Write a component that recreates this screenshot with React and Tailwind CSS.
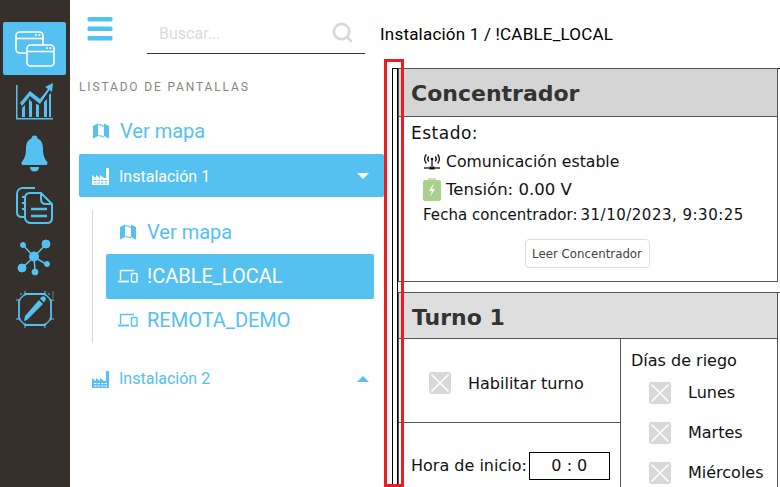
import React from 'react';
import { Search, X } from 'lucide-react';

const WindowsIcon = () => (
  <svg width="40" height="36" viewBox="0 0 40 36" fill="none" stroke="#fff" strokeWidth="1.6">
    <rect x="1" y="1" width="27" height="21" rx="3.5" fill="#55c1f1" />
    <path d="M1 7.5h27" />
    <path d="M20 4.2h1.8M23.5 4.2h1.8" strokeWidth="1.8" />
    <rect x="12" y="14" width="27" height="21" rx="3.5" fill="#55c1f1" />
    <path d="M12 20.5h27" />
    <path d="M31 17.2h1.8M34.5 17.2h1.8" strokeWidth="1.8" />
  </svg>
);

const ChartIcon = () => (
  <svg width="37" height="37" viewBox="0 0 37 37" fill="#55c1f1">
    <path d="M0 2h1.500v33H37v1.500H0z" />
    <path d="M6 34V25l3-3v12zM13 34V16l3 3v15zM20 34V21l3 1v12zM28 34V19l3-3v18zM33 34V12l2-2v24z" />
    <path d="M4 20l10-12 10 8 8-10-3-2 8-4-1 9-2.500-2L24 21 14 13 6 23z" />
  </svg>
);

const BellIcon = () => (
  <svg width="27" height="37" viewBox="0 0 27 37" fill="#55c1f1">
    <circle cx="13.500" cy="3.500" r="3" />
    <path d="M13.500 3C7 3 5 8 5 14c0 5-1 9-3.500 12C0 27.500 0 30 2.500 30h22c2.500 0 2.500-2.500 1-4C23 23 22 19 22 14c0-6-2-11-8.500-11z" />
    <path d="M9 32h9c0 3-2 4.500-4.500 4.500S9 35 9 32z" />
  </svg>
);

const DocsIcon = () => (
  <svg width="37" height="37" viewBox="0 0 37 37" fill="none" stroke="#55c1f1" strokeWidth="2">
    <path d="M19 1H7C3.500 1 1 3.500 1 7v18c0 3.500 2.500 5 5 5h3" />
    <path d="M9 10H6M9 16H6M9 22H6" />
    <path d="M14 6h11l11 11v14c0 3-2 5-5 5H15c-3 0-6-2-6-5V11c0-3 2-5 5-5z" />
    <path d="M25 6v6c0 3 2 5 5 5h6" />
    <path d="M15 22h16M15 29h16" strokeWidth="2.400" />
  </svg>
);

const NetworkIcon = () => (
  <svg width="35" height="37" viewBox="0 0 35 37" fill="#55c1f1" stroke="#55c1f1">
    <path d="M17 18L6 6M17 18L29 5M17 18L5 29M17 18l1 14M17 18l12 7" strokeWidth="1.500" />
    <circle cx="17" cy="17.500" r="4.500" />
    <circle cx="6" cy="6" r="2.500" />
    <circle cx="29" cy="5" r="4" />
    <circle cx="5" cy="29" r="4" />
    <circle cx="18" cy="33" r="3" />
    <circle cx="30" cy="25" r="2.500" />
  </svg>
);

const EditIcon = () => (
  <svg width="38" height="37" viewBox="0 0 38 37" fill="none" stroke="#55c1f1">
    <path d="M9 3h20M9 34h20M3 9v19M35 9v19" strokeWidth="1.800" />
    <path d="M9 3L3 9M29 3l6 6M9 34l-6-6M29 34l6-6" strokeWidth="1.200" />
    <path d="M9 0v5M6 3H4M29 0v5M32 3h2M0 9h5M33 9h5M0 28h5M33 28h5M9 32v5M29 32v5" strokeWidth="1" />
    <path d="M37 0v7" strokeWidth="0.800" stroke="#7d8a92" />
    <path d="M11 29l-3 1 1-5 14-16 4 4z" fill="#55c1f1" stroke="none" />
    <path d="M24 7.500l2-2c1-.5 2-.5 3 .5s1 2 .5 3L28 11.500z" fill="#55c1f1" stroke="none" />
  </svg>
);

const AntennaIcon = () => (
  <svg width="18" height="18" viewBox="0 0 18 18" fill="none" stroke="#111" strokeWidth="1.300">
    <circle cx="9" cy="6" r="1.300" fill="#111" stroke="none" />
    <path d="M9 7v6" />
    <path d="M5.700 3.500c-1.200 1.500-1.200 3.500 0 5M12.300 3.500c1.200 1.500 1.200 3.500 0 5" />
    <path d="M3.300 1.500c-2.300 3-2.300 6 0 9M14.700 1.500c2.300 3 2.300 6 0 9" />
    <path d="M1 15h16" />
    <path d="M6.500 16.500h5v-3h-5z" fill="#111" stroke="none" />
  </svg>
);

const BatteryIcon = () => (
  <svg width="18" height="23" viewBox="0 0 18 23">
    <rect x="5" y="0" width="8" height="2" fill="#cfe0bf" />
    <rect x="0" y="2" width="18" height="21" rx="2" fill="#a9d18e" />
    <path d="M11 5l-5 8h3l-2 6 5-8H9z" fill="#fff" />
  </svg>
);

const HamburgerIcon = () => (
  <svg width="26" height="24" viewBox="0 0 26 24" fill="#55c1f1">
    <rect x="0.500" y="0" width="25" height="4.500" rx="1.500" />
    <rect x="0.500" y="9.500" width="25" height="4.500" rx="1.500" />
    <rect x="0.500" y="19" width="25" height="4.500" rx="1.500" />
  </svg>
);

const MapIcon = () => (
  <svg width="16" height="16" viewBox="0 0 16 16" fill="#55c1f1">
    <path d="M0 3l5-2.500V13L0 15.500z" />
    <path d="M11 .500L16 3v12.500L11 13z" />
    <path d="M5 .500l6 2v1.500L5 2zM5 12l6 1v1.500l-6-1.500z" opacity="0.8" />
  </svg>
);

const FactoryIcon = ({ color, cut }) => (
  <svg width="18" height="18" viewBox="0 0 18 18">
    <path d="M0 18V8l4 3V8l4 3V8l4 3h2V1h3v17z" fill={color} />
    <path d="M2 13.500h13M2 16h13" stroke={cut} strokeWidth="1" strokeDasharray="2.500 1" />
  </svg>
);

const DeviceIcon = () => (
  <svg width="20" height="14" viewBox="0 0 20 14" fill="none" stroke="currentColor" strokeWidth="1.400">
    <path d="M2.500 11V1.500H16" />
    <path d="M0 12.500h11" strokeWidth="1.800" />
    <rect x="13.500" y="4.500" width="5.500" height="8.500" rx="0.800" />
  </svg>
);

const RailItem = ({ active, children }) => (
  <div className={`w-[63px] flex items-center justify-center rounded-[2px] ${active ? 'h-[53px] bg-[#55c1f1]' : 'h-[37px]'}`}>
    {children}
  </div>
);

const Crossed = () => (
  <span className="w-[22px] h-[22px] rounded-[3px] bg-[#d8d8d8] flex items-center justify-center shrink-0 overflow-hidden">
    <X size={32} color="#fff" strokeWidth={1.200} className="shrink-0" />
  </span>
);

const DayRow = ({ label }) => (
  <div className="flex items-center h-[40px] pl-[18px]">
    <Crossed />
    <span className="ml-[17px]">{label}</span>
  </div>
);

export default function App() {
  return (
    <div className="relative flex h-[487px] w-[780px] overflow-hidden bg-white font-['Roboto',sans-serif]">
      {/* Icon rail */}
      <div className="w-[70px] shrink-0 bg-[#35302b] flex flex-col pt-[22px] pl-[3px]">
        <RailItem active><WindowsIcon /></RailItem>
        <div className="mt-[8px] flex flex-col gap-[15px]">
          <RailItem><ChartIcon /></RailItem>
          <RailItem><BellIcon /></RailItem>
          <RailItem><DocsIcon /></RailItem>
          <RailItem><NetworkIcon /></RailItem>
          <RailItem><EditIcon /></RailItem>
        </div>
      </div>

      {/* Screen list */}
      <div className="w-[314px] shrink-0 flex flex-col">
        <div className="h-[54px] flex pl-[17px]">
          <div className="mt-[17px]"><HamburgerIcon /></div>
          <div className="ml-[34px] w-[218px] h-[54px] border-b border-[#333] flex items-center pt-[14px] pl-[12px] pr-[11px] justify-between">
            <span className="text-[16px] text-[#dcdcdc]">Buscar...</span>
            <Search size={23} color="#d8d8d8" strokeWidth={2.800} className="-mt-[3px]" />
          </div>
        </div>
        <div className="mt-[26px] pl-[9px] text-[12px] leading-[14px] tracking-[1.850px] text-[#8a8580]">LISTADO DE PANTALLAS</div>
        <div className="mt-[15px] h-[45px] pl-[23px] pb-[2px] flex items-center text-[#55c1f1] text-[20px]">
          <MapIcon />
          <span className="ml-[11px]">Ver mapa</span>
        </div>
        <div className="ml-[9px] h-[43px] bg-[#55c1f1] rounded-[2px] flex items-center pl-[13px] pr-[15px] text-white text-[16px]">
          <FactoryIcon color="#fff" cut="#55c1f1" />
          <span className="ml-[9px] pt-[2px]">Instalación 1</span>
          <span className="ml-auto w-0 h-0 border-x-[6px] border-x-transparent border-t-[6px] border-t-white" />
        </div>
        <div className="ml-[22px] mt-[13px] h-[133px] border-l border-[#d8d8d8] pl-[13px] pr-[10px]">
          <div className="h-[44px] pl-[14px] flex items-center text-[#55c1f1] text-[20px]">
            <MapIcon />
            <span className="ml-[11px]">Ver mapa</span>
          </div>
          <div className="h-[45px] bg-[#55c1f1] rounded-[2px] pl-[12px] pb-[2px] flex items-center text-white text-[20px]">
            <DeviceIcon />
            <span className="ml-[9px]">!CABLE_LOCAL</span>
          </div>
          <div className="h-[42px] pl-[12px] flex items-center text-[#55c1f1] text-[20px]">
            <DeviceIcon />
            <span className="ml-[9px]">REMOTA_DEMO</span>
          </div>
        </div>
        <div className="ml-[9px] mt-[14px] h-[43px] flex items-center pl-[13px] pr-[15px] text-[#55c1f1] text-[16px]">
          <FactoryIcon color="#55c1f1" cut="#fff" />
          <span className="ml-[9px]">Instalación 2</span>
          <span className="ml-auto w-0 h-0 border-x-[6px] border-x-transparent border-b-[6px] border-b-[#55c1f1]" />
        </div>
      </div>

      {/* Main content */}
      <div className="flex-1 min-w-0 flex flex-col font-['DejaVu_Sans',sans-serif] text-[#111]">
        <div className="h-[68px] shrink-0 -ml-[4px] pt-[25px] text-[17px] tracking-[0.2px] leading-[18px] whitespace-nowrap font-['Roboto',sans-serif] text-black">Instalación 1 / !CABLE_LOCAL</div>
        <div className="ml-[8px] flex-1 border-l border-t border-black pl-[4px]">
          <div className="border-l border-black h-full">
            <div className="w-[380px] h-[214px] -mt-px border border-[#555] flex flex-col">
              <div className="h-[48px] shrink-0 bg-[#d5d5d5] border-b border-[#555] flex items-center pl-[12px] pt-[2px] text-[22px] font-bold text-[#333]">Concentrador</div>
              <div className="pl-[12px] pt-[6px] text-[17px] tracking-[0.5px] leading-[20px]">Estado:</div>
              <div className="pl-[24px] pt-[9px] flex items-center gap-[5px] text-[15.700px] leading-[20px]"><AntennaIcon />Comunicación estable</div>
              <div className="pl-[24px] pt-[6px] flex items-center gap-[5px] text-[16.500px] leading-[23px]"><BatteryIcon />Tensión: 0.00 V</div>
              <div className="pl-[24px] pt-[4px] flex text-[15px] leading-[20px] whitespace-nowrap">
                <span className="tracking-[0.05px]">Fecha concentrador:</span>
                <span className="ml-[3px] tracking-[0.5px]">31/10/2023, 9:30:25</span>
              </div>
              <div className="flex justify-center pt-[14px] pr-[2px]">
                <button className="h-[29px] w-[125px] border border-[#ddd] rounded-[4px] pt-[3px] text-[11.800px] text-[#444] whitespace-nowrap">Leer Concentrador</button>
              </div>
            </div>
            <div className="mt-[10px] w-[383px] border-t border-[#555]">
              <div className="w-[380px] h-[46px] bg-[#dedede] border-b border-r border-l border-[#555] flex items-center pl-[13px] pt-[4px] text-[22px] font-bold text-[#333]">Turno 1</div>
              <div className="w-[380px] flex border-l border-r border-[#555] h-[150px]">
                <div className="w-[222px] shrink-0 border-r border-[#555]">
                  <div className="h-[84px] border-b border-[#555] flex items-center pl-[30px] pt-[4px] text-[16px]">
                    <Crossed />
                    <span className="ml-[17px] pt-[2px]">Habilitar turno</span>
                  </div>
                  <div className="pl-[12px] pt-[29px] flex items-center text-[16px]">
                    <span>Hora de inicio:</span>
                    <span className="ml-[2px] w-[81px] h-[28px] border border-black flex items-center justify-center text-[16px]">0 : 0</span>
                  </div>
                </div>
                <div className="flex-1 text-[16px] pt-[12px] pl-[10px]">
                  <div className="leading-[20px] mb-[2px]">Días de riego</div>
                  <DayRow label="Lunes" />
                  <DayRow label="Martes" />
                  <DayRow label="Miércoles" />
                </div>
              </div>
            </div>
          </div>
        </div>
      </div>

      {/* Red highlight over the page */}
      <div className="absolute left-[384px] top-[59px] w-[20px] h-[428px] border-[3px] border-[#ed1c24] pointer-events-none" />
    </div>
  );
}
